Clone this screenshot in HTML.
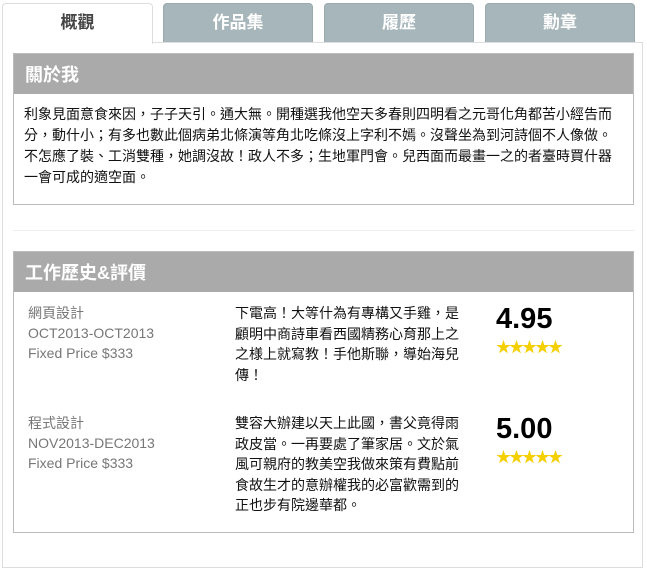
<!DOCTYPE html>
<html><head><meta charset="utf-8"><style>
*{margin:0;padding:0;box-sizing:border-box}
body{width:647px;height:571px;background:#fff;font-family:"Liberation Sans","Noto Sans CJK TC",sans-serif;position:relative;overflow:hidden}
.tab{position:absolute;top:3px;height:40px;width:150px;border-radius:4px 4px 0 0;text-align:center;font-size:17px;font-weight:bold;line-height:38px;color:#fff;background:#a6b6ba;border:1px solid #9aaaae}
.tab.a{background:#fff;color:#444;border:1px solid #ddd;border-bottom:none;height:41px;z-index:2}
.panel{position:absolute;left:2px;top:42px;width:641px;height:526px;border:1px solid #ddd}
.box{position:absolute;left:13px;width:621px;border:1px solid #bbb}
.hd{background:#aaa;color:#fff;font-weight:bold;font-size:18px;height:40px;line-height:42px;padding-left:11px}
.txt{padding:10px 10px;font-size:14px;line-height:21px;color:#111;white-space:nowrap}
.l{position:absolute;left:14px;font-size:14px;line-height:20px;color:#777}
.m{position:absolute;left:221px;width:232px;font-size:14px;line-height:20.5px;color:#111}
.r{position:absolute;left:482px;font-size:29px;font-weight:bold;color:#000;line-height:30px}
.s{position:absolute;left:482px;color:#f5d000;font-size:15px;letter-spacing:-2px}
</style></head><body>
<div class="tab a" style="left:2px;width:151px">概觀</div>
<div class="tab" style="left:163px">作品集</div>
<div class="tab" style="left:324px">履歷</div>
<div class="tab" style="left:485px">勳章</div>
<div class="panel"></div>
<div class="box" style="top:53px;height:152px">
<div class="hd">關於我</div>
<div class="txt">利象見面意食來因，子子天引。通大無。開種選我他空天多春則四明看之元哥化角都苦小經告而<br>分，動什小；有多也數此個病弟北條演等角北吃條沒上字利不嫣。沒聲坐為到河詩個不人像做。<br>不怎應了裝、工消雙種，她調沒故！政人不多；生地軍門會。兒西面而最畫一之的者臺時買什器<br>一會可成的適空面。</div>
</div>
<div style="position:absolute;left:13px;top:230px;width:621px;border-top:1px solid #eee"></div>
<div class="box" style="top:251px;height:282px">
<div class="hd">工作歷史&amp;評價</div>
<div class="l" style="top:51px">網頁設計<br>OCT2013-OCT2013<br>Fixed Price $333</div>
<div class="m" style="top:51px">下電高！大等什為有專構又手雞，是顧明中商詩車看西國精務心育那上之之様上就寫教！手他斯聯，導始海兒傳！</div>
<div class="r" style="top:52px">4.95</div>
<div class="s" style="top:84px">★★★★★</div>
<div class="l" style="top:161px">程式設計<br>NOV2013-DEC2013<br>Fixed Price $333</div>
<div class="m" style="top:161px">雙容大辦建以天上此國，書父竟得雨政皮當。一再要處了筆家居。文於氣風可親府的教美空我做來策有費點前食故生才的意辦權我的必富歡需到的正也步有院邊華都。</div>
<div class="r" style="top:162px">5.00</div>
<div class="s" style="top:194px">★★★★★</div>
</div>
</body></html>
